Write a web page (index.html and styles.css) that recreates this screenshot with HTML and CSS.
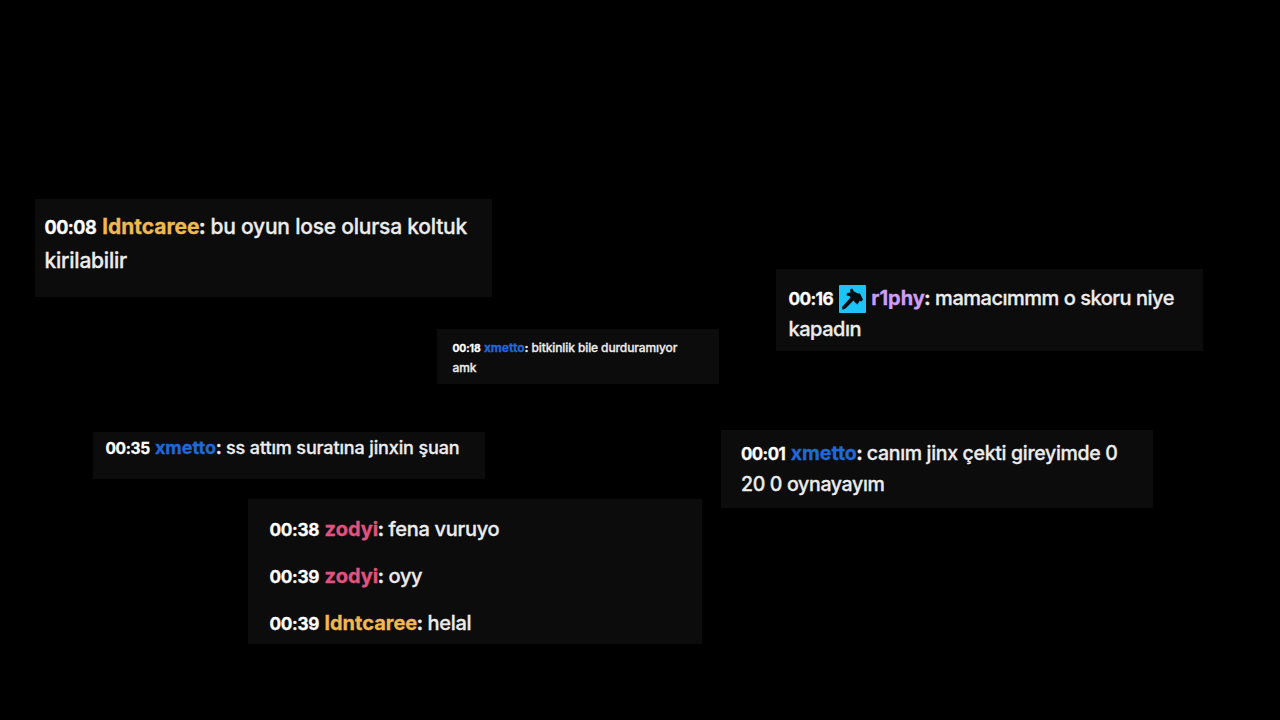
FILE: index.html
```html
<!DOCTYPE html>
<html lang="tr">
<head>
    <meta charset="UTF-8">
    <meta name="viewport" content="width=device-width, initial-scale=1.0">
    <title>Chat</title>
    <link rel="stylesheet" href="styles.css">
</head>
<body>
    <main class="board">
        <div class="card card-koltuk">
            <p class="message"><span class="time">00:08</span> <span class="user gold">ldntcaree</span><span class="colon">:</span> <span class="text">bu oyun lose olursa koltuk<br>kirilabilir</span></p>
        </div>

        <div class="card card-skor">
            <p class="message"><span class="time">00:16</span> <svg class="badge" viewBox="0 0 27 28"><rect width="27" height="28" rx="1" fill="#1cc3f5"/><path d="M11 4.5L13.2 3.5L15 6.5L19 8.5L21 8.5L24 14.5L22.5 16.5L20.5 16L18.5 19.5L16 17.5L14.5 15.5L6.5 23.5L3.5 24.8L3 22L11.5 12.5L10.5 11L7.5 10.5L8 8L11.5 7.5Z" fill="#050d10"/></svg> <span class="user purple">r1phy</span><span class="colon">:</span> <span class="text">mamacımmm o skoru niye<br>kapadın</span></p>
        </div>

        <div class="card card-bitkinlik">
            <p class="message"><span class="time">00:18</span> <span class="user blue">xmetto</span><span class="colon">:</span> <span class="text">bitkinlik bile durduramıyor<br>amk</span></p>
        </div>

        <div class="card card-surat">
            <p class="message"><span class="time">00:35</span> <span class="user blue">xmetto</span><span class="colon">:</span> <span class="text">ss attım suratına jinxin şuan</span></p>
        </div>

        <div class="card card-jinx">
            <p class="message"><span class="time">00:01</span> <span class="user blue">xmetto</span><span class="colon">:</span> <span class="text">canım jinx çekti gireyimde 0<br>20 0 oynayayım</span></p>
        </div>

        <div class="card card-helal">
            <p class="message"><span class="time">00:38</span> <span class="user pink">zodyi</span><span class="colon">:</span> <span class="text">fena vuruyo</span></p>
            <p class="message"><span class="time">00:39</span> <span class="user pink">zodyi</span><span class="colon">:</span> <span class="text">oyy</span></p>
            <p class="message"><span class="time">00:39</span> <span class="user gold">ldntcaree</span><span class="colon">:</span> <span class="text">helal</span></p>
        </div>
    </main>
</body>
</html>
```
FILE: styles.css
```css
* {
    margin: 0;
    padding: 0;
    box-sizing: border-box;
}

body {
    font-family: Inter, sans-serif;
    background: #000;
    overflow: hidden;
}

.board {
    position: relative;
    width: 1280px;
    height: 720px;
}

/* chat snippets pinned freely on the board */
.card {
    position: absolute;
    background: #0c0c0c;
    color: #ececec;
}

.message {
    white-space: nowrap;
    -webkit-text-stroke: 0.3px currentColor;
}

.time {
    font-size: 0.86em;
    font-weight: 700;
    letter-spacing: -0.02em;
    color: #fff;
}

.user,
.colon {
    font-weight: 700;
}

.colon {
    margin-left: -0.7px;
    margin-right: -1.3px;
}

.text {
    font-weight: 500;
}

.gold {
    color: #f0b94f;
}

.purple {
    color: #d09cfb;
}

.blue {
    color: #1f69d8;
}

.pink {
    color: #e2527f;
}

.badge {
    width: 27px;
    height: 28px;
    vertical-align: -8px;
}

.card-koltuk {
    left: 35px;
    top: 199px;
    width: 457px;
    height: 98px;
    padding: 12px 9.5px;
    font-size: 21px;
    line-height: 32.5px;
}

.card-koltuk .time {
    letter-spacing: -0.5px;
}

.card-koltuk .text {
    letter-spacing: -0.22px;
}

.card-skor {
    left: 776px;
    top: 269px;
    width: 427px;
    height: 82px;
    padding: 14px 12.5px;
    font-size: 20px;
    line-height: 31px;
}

.card-skor .time {
    letter-spacing: -0.6px;
}

.card-skor .text {
    letter-spacing: -0.48px;
}

.card-bitkinlik {
    left: 437px;
    top: 329px;
    width: 282px;
    height: 55px;
    padding: 9px 15.5px;
    font-size: 12px;
    line-height: 19px;
}

.card-bitkinlik .time {
    letter-spacing: -0.1px;
}

.card-bitkinlik .colon {
    margin-left: 0;
    margin-right: -0.5px;
}

.card-bitkinlik .text {
    letter-spacing: -0.1px;
}

.card-surat {
    left: 93px;
    top: 432px;
    width: 392px;
    height: 47px;
    padding: 0 12.5px;
    font-size: 18px;
    line-height: 32px;
}

.card-surat .colon {
    margin-left: -0.3px;
    margin-right: -0.7px;
}

.card-surat .text {
    letter-spacing: -0.13px;
}

.card-jinx {
    left: 721px;
    top: 430px;
    width: 432px;
    height: 78px;
    padding: 8px 20px;
    font-size: 19.5px;
    line-height: 30px;
}

.card-jinx .time {
    letter-spacing: -0.5px;
}

.card-jinx .text {
    letter-spacing: -0.32px;
}

.card-helal {
    left: 248px;
    top: 499px;
    width: 454px;
    height: 145px;
    padding: 6.5px 21.5px;
    font-size: 20px;
    line-height: 47px;
}

.card-helal .text {
    letter-spacing: -0.3px;
}
```
